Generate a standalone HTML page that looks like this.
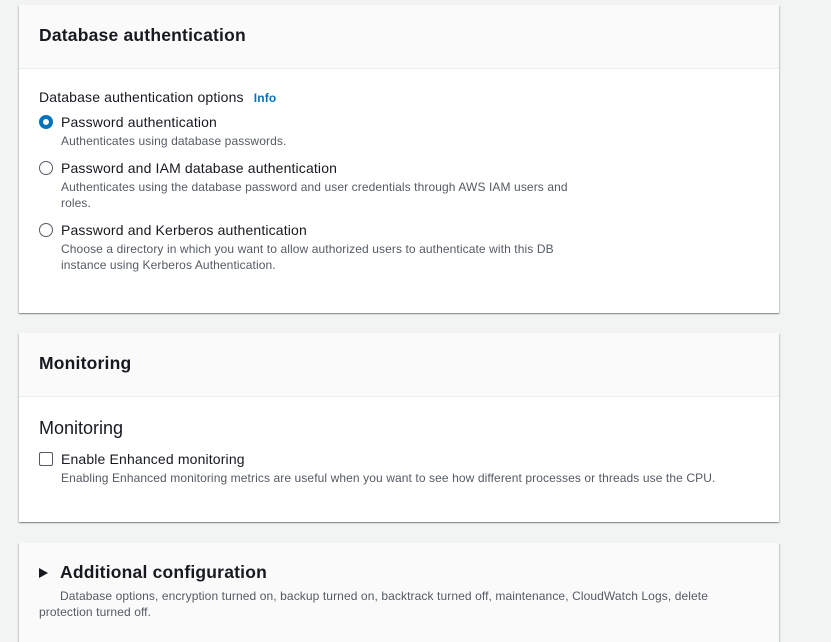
<!DOCTYPE html>
<html><head><style>
*{margin:0;padding:0;box-sizing:border-box}
body{width:831px;height:642px;background:#f2f3f3;font-family:"Liberation Sans",sans-serif;color:#16191f;position:relative;overflow:hidden}
.card{position:absolute;left:19px;width:760px;background:#fff;box-shadow:0 1px 1px 0 rgba(0,28,36,.3),1px 1px 1px 0 rgba(0,28,36,.15),-1px 1px 1px 0 rgba(0,28,36,.15)}
.hd{background:#fafafa;border-bottom:1px solid #eaeded;height:64px;padding-left:20px;font-weight:bold;font-size:17.5px;line-height:60px;letter-spacing:.2px}
.t{position:absolute;left:20px;white-space:nowrap}
.lbl{font-size:14px;letter-spacing:.15px}
.d{font-size:12px;color:#545b64;line-height:16px;white-space:normal;letter-spacing:.1px}
.radio{position:absolute;left:20px;width:14px;height:14px;border-radius:50%;border:1.5px solid #545b64}
.radio.on{border:4px solid #0073bb}
</style></head><body>
<div class="card" style="top:5px;height:308px">
 <div class="hd">Database authentication</div>
 <div class="t lbl" style="top:84px">Database authentication options <span style="color:#0073bb;font-weight:bold;font-size:12px;margin-left:6px">Info</span></div>
 <div class="radio on" style="top:110px"></div>
 <div class="t lbl" style="left:42px;top:109px">Password authentication</div>
 <div class="t d" style="left:42px;top:128px">Authenticates using database passwords.</div>
 <div class="radio" style="top:156px"></div>
 <div class="t lbl" style="left:42px;top:155px">Password and IAM database authentication</div>
 <div class="t d" style="left:42px;top:174px;width:530px">Authenticates using the database password and user credentials through AWS IAM users and roles.</div>
 <div class="radio" style="top:218px"></div>
 <div class="t lbl" style="left:42px;top:217px">Password and Kerberos authentication</div>
 <div class="t d" style="left:42px;top:236px;width:520px">Choose a directory in which you want to allow authorized users to authenticate with this DB instance using Kerberos Authentication.</div>
</div>
<div class="card" style="top:333px;height:189px">
 <div class="hd">Monitoring</div>
 <div class="t" style="top:85px;font-size:18px">Monitoring</div>
 <div style="position:absolute;left:20px;top:119px;width:14px;height:14px;border:1.5px solid #545b64;border-radius:2px"></div>
 <div class="t lbl" style="left:42px;top:118px">Enable Enhanced monitoring</div>
 <div class="t d" style="left:42px;top:137px">Enabling Enhanced monitoring metrics are useful when you want to see how different processes or threads use the CPU.</div>
</div>
<div class="card" style="top:543px;height:99px;background:#fafafa">
 <div style="position:absolute;left:20px;top:25px;width:0;height:0;border-left:9px solid #16191f;border-top:5px solid transparent;border-bottom:5px solid transparent"></div>
 <div class="t" style="left:41px;top:19px;font-size:17.5px;font-weight:bold;letter-spacing:.2px">Additional configuration</div>
 <div class="t d" style="top:45px;width:700px;text-indent:21px">Database options, encryption turned on, backup turned on, backtrack turned off, maintenance, CloudWatch Logs, delete protection turned off.</div>
</div>
</body></html>
